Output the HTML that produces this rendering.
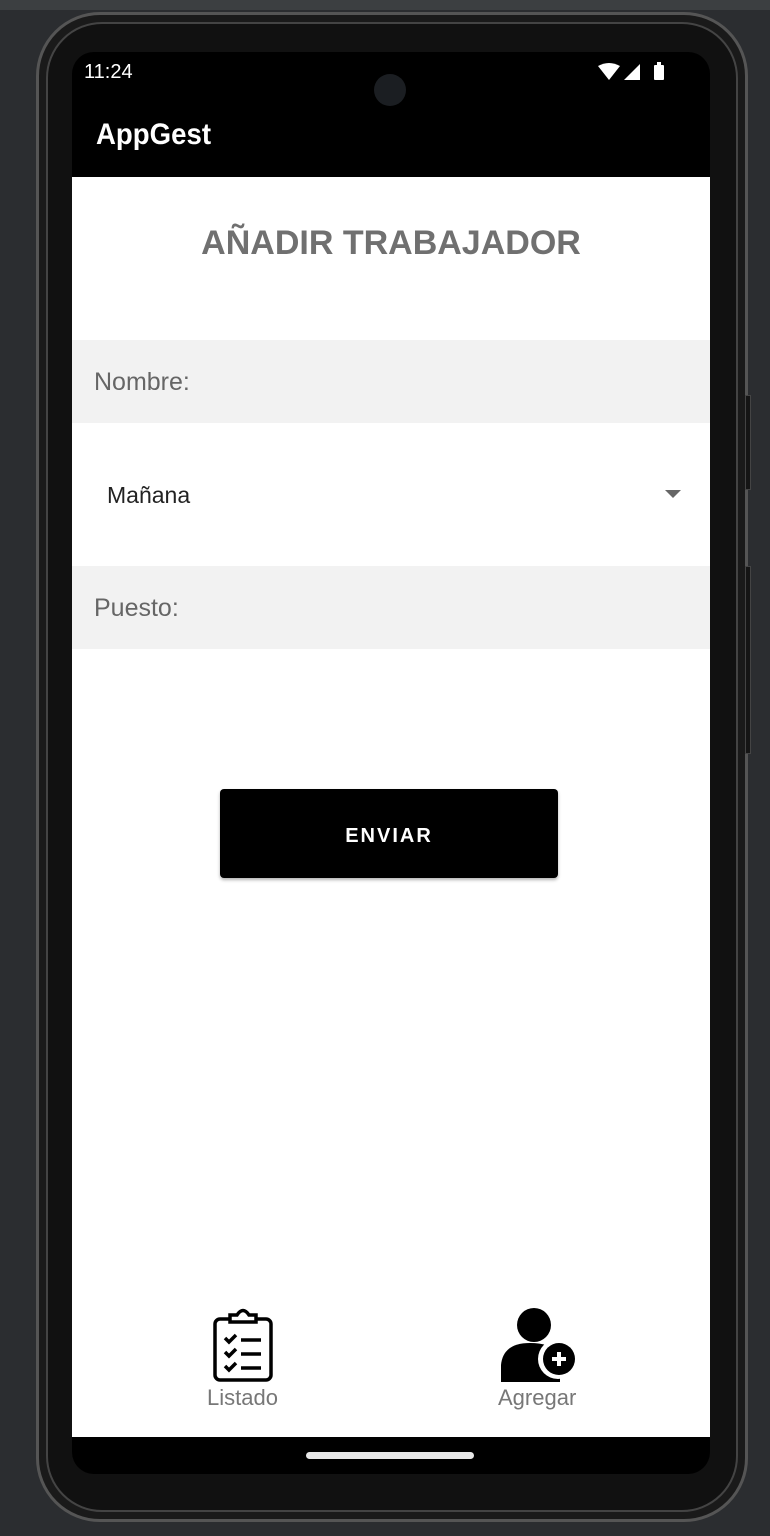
<!DOCTYPE html>
<html><head><meta charset="utf-8"><style>
*{margin:0;padding:0;box-sizing:border-box}
body{width:770px;height:1536px;background:#2b2d30;position:relative;overflow:hidden;font-family:"Liberation Sans",sans-serif}
.topbar{position:absolute;left:0;top:0;width:770px;height:10px;background:#3c3f41}
.frame{position:absolute;left:36px;top:12px;width:712px;height:1510px;border-radius:64px;background:#1a1a1a;border:3px solid #555}
.frame2{position:absolute;left:46px;top:22px;width:692px;height:1490px;border-radius:56px;background:#111;border:2px solid #444}
.btnside{position:absolute;left:745px;width:6px;background:#151515;border:1px solid #444}
.screen{position:absolute;left:72px;top:52px;width:638px;height:1422px;border-radius:22px;background:#000;overflow:hidden}
.content{position:absolute;left:0;top:125px;width:638px;height:1260px;background:#fff}
.abs{position:absolute}
</style></head><body>
<div class="topbar"></div>
<div class="frame"></div>
<div class="frame2"></div>
<div class="btnside" style="top:395px;height:95px"></div>
<div class="btnside" style="top:566px;height:188px"></div>
<div class="screen">
  <div class="abs" style="left:12px;top:9px;color:#fff;font-size:20px">11:24</div>
  <div class="abs" style="left:302px;top:22px;width:32px;height:32px;border-radius:50%;background:#1b1e22"></div>
  <svg class="abs" style="left:526px;top:10px" width="72" height="20" viewBox="0 0 72 20">
    <path d="M0 4 Q11 -2 22 4 L11 18 Z" fill="#fff"/>
    <path d="M26 18 L42 2 L42 18 Z" fill="#fff"/>
    <rect x="56" y="3" width="10" height="15" rx="1" fill="#fff"/><rect x="59" y="0" width="4" height="3" fill="#fff"/>
  </svg>
  <div class="abs" style="left:24px;top:66px;color:#fff;font-size:30px;font-weight:bold;transform:scaleX(0.92);transform-origin:left">AppGest</div>
  <div class="content">
    <div class="abs" style="left:0;top:47px;width:638px;text-align:center;font-size:34px;font-weight:bold;color:#707070">AÑADIR TRABAJADOR</div>
    <div class="abs" style="left:0;top:163px;width:638px;height:83px;background:#f2f2f2"></div>
    <div class="abs" style="left:22px;top:191px;font-size:25px;color:#666">Nombre:</div>
    <div class="abs" style="left:35px;top:305px;font-size:23px;color:#222">Mañana</div>
    <svg class="abs" style="left:593px;top:313px" width="16" height="9"><path d="M0 0H16L8 8Z" fill="#666"/></svg>
    <div class="abs" style="left:0;top:389px;width:638px;height:83px;background:#f2f2f2"></div>
    <div class="abs" style="left:22px;top:417px;font-size:25px;color:#666">Puesto:</div>
    <div class="abs" style="left:148px;top:612px;width:338px;height:89px;background:#000;border-radius:4px;box-shadow:0 2px 3px rgba(0,0,0,.3);color:#fff;font-size:20px;letter-spacing:2px;text-align:center;line-height:94px;font-weight:bold">ENVIAR</div>
    <svg class="abs" style="left:140px;top:1130px" width="62" height="76" viewBox="0 0 62 76">
      <rect x="3" y="12" width="56" height="61" rx="5" fill="none" stroke="#000" stroke-width="3.5"/>
      <path d="M18 15 V8 H25 Q31 -1 37 8 H44 V15 Z" fill="#fff" stroke="#000" stroke-width="3.5"/>
      <path d="M13 31l4 4 7-7M13 45l4 4 7-7M13 59l4 4 7-7" fill="none" stroke="#000" stroke-width="3.5"/>
      <path d="M29 33H49M29 47H49M29 61H49" stroke="#000" stroke-width="3.5"/>
    </svg>
    <div class="abs" style="left:135px;top:1208px;font-size:22px;color:#777">Listado</div>
    <svg class="abs" style="left:428px;top:1130px" width="78" height="78" viewBox="0 0 78 78">
      <circle cx="34" cy="18" r="17" fill="#000"/>
      <path d="M1 75 V58 Q3 36 30 36 Q50 36 60 46 V75 Z" fill="#000"/>
      <circle cx="58" cy="52" r="20" fill="#fff"/>
      <circle cx="59" cy="52" r="16" fill="#000"/>
      <path d="M59 45V59M52 52H66" stroke="#fff" stroke-width="4"/>
    </svg>
    <div class="abs" style="left:426px;top:1208px;font-size:22px;color:#777">Agregar</div>
  </div>
  <div class="abs" style="left:234px;top:1400px;width:168px;height:7px;border-radius:4px;background:#e8e8e8"></div>
</div>
</body></html>
